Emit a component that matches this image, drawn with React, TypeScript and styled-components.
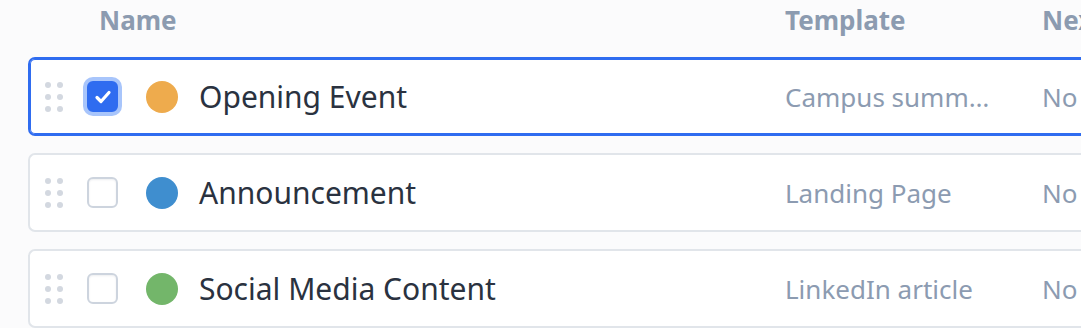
import { type FC } from 'react';
import styled, { createGlobalStyle } from 'styled-components';

type Campaign = {
  name: string;
  color: string;
  template: string;
  next: string;
  selected?: boolean;
};

const campaigns: Campaign[] = [
  { name: 'Opening Event', color: '#eeab4d', template: 'Campus summer kickoff', next: 'No', selected: true },
  { name: 'Announcement', color: '#3f8ecf', template: 'Landing Page', next: 'No' },
  { name: 'Social Media Content', color: '#73b66a', template: 'LinkedIn article', next: 'No' },
];

const GlobalStyle = createGlobalStyle`
  html, body {
    margin: 0;
    background: #fbfbfc;
    overflow: hidden;
  }
  body {
    font-family: 'Noto Sans', 'Open Sans', sans-serif;
  }
`;

const Table = styled.div`
  width: 1400px;
  padding-left: 28px;
`;

// header text sits a bit left of the row content
const HeaderRow = styled.div`
  display: grid;
  grid-template-columns: 686px 257px 1fr;
  padding-left: 71px;
  height: 57px;
  align-items: start;
`;

const HeaderCell = styled.div`
  font-size: 26px;
  font-weight: 700;
  color: #8c9bb0;
  line-height: 40px;
`;

const Row = styled.div<{ $selected?: boolean }>`
  display: grid;
  grid-template-columns: 41px 60px 53px 586px 257px 1fr;
  align-items: center;
  box-sizing: border-box;
  height: 79px;
  margin-bottom: 17px;
  padding-left: 15px;
  background: #fff;
  border: 2px solid ${(p) => (p.$selected ? '#2f6cf0' : '#e1e5ea')};
  border-right: none;
  border-radius: 7px 0 0 7px;
  box-shadow: ${(p) => (p.$selected ? 'inset 0 0 0 1px #2f6cf0' : 'none')};
`;

const Handle = styled.div`
  display: grid;
  grid-template-columns: repeat(2, 6px);
  gap: 6px;
  span {
    width: 6px;
    height: 6px;
    border-radius: 50%;
    background: #d3d8e0;
  }
`;

const Check = styled.div<{ $checked?: boolean }>`
  display: flex;
  align-items: center;
  justify-content: center;
  box-sizing: border-box;
  width: 31px;
  height: 31px;
  margin-left: 1px;
  border-radius: 6px;
  border: 2px solid ${(p) => (p.$checked ? '#2f6cf0' : '#cdd4de')};
  background: ${(p) => (p.$checked ? '#2f6cf0' : '#fff')};
  box-shadow: ${(p) =>
    p.$checked ? '0 0 0 4px #a8c5fb' : 'inset 0 1px 2px rgba(30, 40, 60, 0.08)'};
`;

const ColorDot = styled.div<{ $color: string }>`
  width: 32px;
  height: 32px;
  border-radius: 50%;
  background: ${(p) => p.$color};
`;

const Name = styled.div`
  font-size: 30px;
  color: #2a3240;
  white-space: nowrap;
`;

const Muted = styled.div`
  font-size: 26px;
  color: #8c9bb1;
  white-space: nowrap;
  overflow: hidden;
  text-overflow: ellipsis;
  max-width: 212px;
`;

const CampaignRow: FC<{ item: Campaign }> = ({ item }) => {
  return (
    <Row $selected={item.selected}>
      <Handle>
        {Array.from({ length: 6 }).map((_, i) => (
          <span key={i} />
        ))}
      </Handle>
      <Check $checked={item.selected}>
        {item.selected && (
          <svg width="20" height="20" viewBox="0 0 20 20" fill="none">
            <path d="M4 10.5l4 4 8-9" stroke="#fff" strokeWidth="3.2" strokeLinecap="round" strokeLinejoin="round" />
          </svg>
        )}
      </Check>
      <ColorDot $color={item.color} />
      <Name>{item.name}</Name>
      <Muted>{item.template}</Muted>
      <Muted>{item.next}</Muted>
    </Row>
  );
};

const App: FC = () => {
  return (
    <>
      <GlobalStyle />
      <Table>
        <HeaderRow>
          <HeaderCell>Name</HeaderCell>
          <HeaderCell>Template</HeaderCell>
          <HeaderCell>Next send</HeaderCell>
        </HeaderRow>
        {campaigns.map((c) => (
          <CampaignRow key={c.name} item={c} />
        ))}
      </Table>
    </>
  );
};

export default App;
